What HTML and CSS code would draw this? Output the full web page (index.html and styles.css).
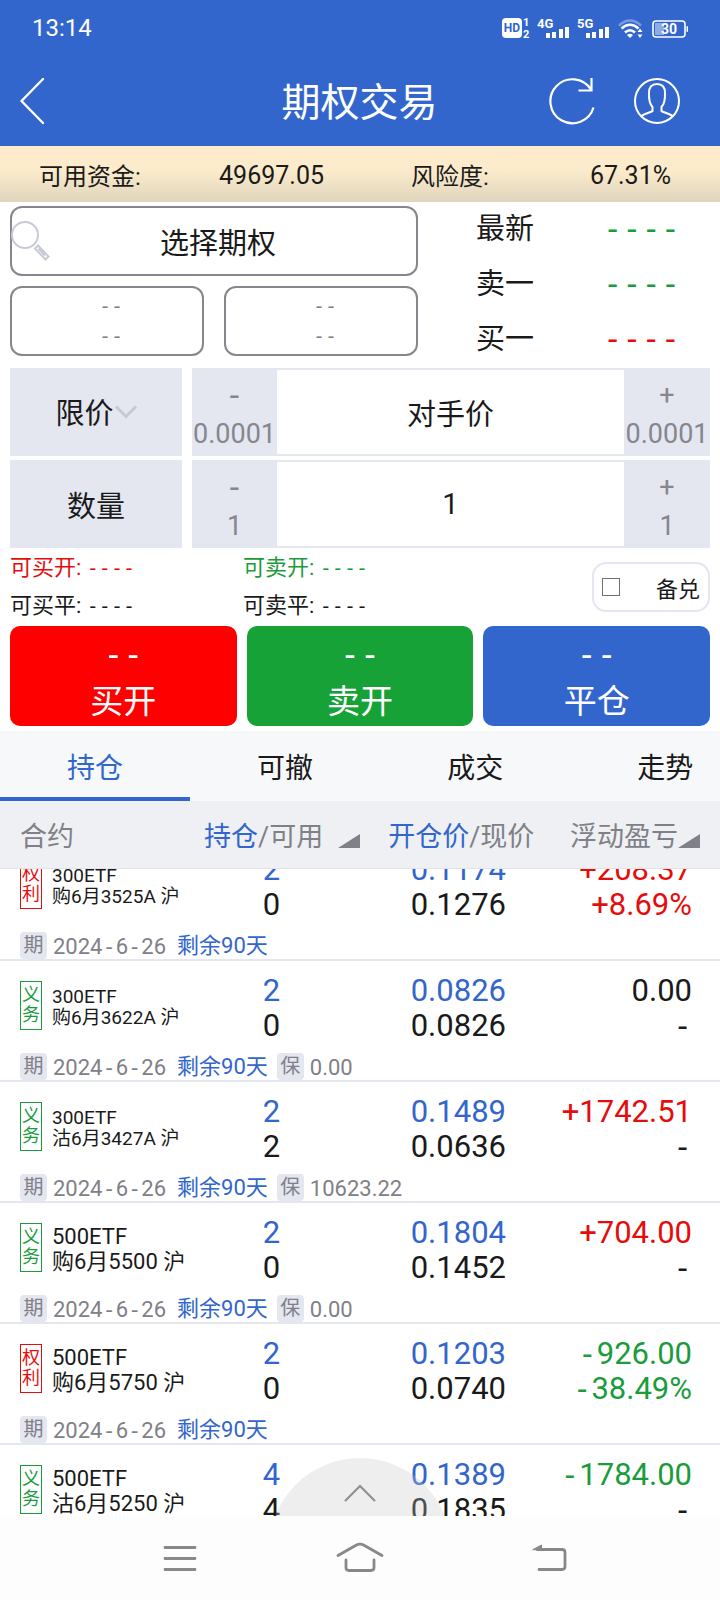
FILE: index.html
```html
<!DOCTYPE html>
<html lang="zh-CN">
<head>
<meta charset="utf-8">
<meta name="viewport" content="width=device-width, initial-scale=1">
<title>期权交易</title>
<link rel="stylesheet" href="styles.css">
</head>
<body>
<div class="app">
  <header class="header">
    <div class="status">
      <span class="clock">13:14</span>
      <svg class="status-icons" width="188" height="24" viewBox="501 16 188 24" fill="#fff" aria-hidden="true">
        <rect x="502" y="18" width="20" height="20" rx="4"/>
        <text x="512" y="32" class="hd-text" text-anchor="middle">HD</text>
        <text x="523" y="26" class="sim-text">1</text>
        <text x="523" y="38" class="sim-text">2</text>
        <text x="537" y="28" class="net-text">4G</text>
        <path d="M546 33h4v5h-4zM552 32h4v6h-4zM559 29h4v9h-4zM565 27h4v11h-4z"/>
        <text x="577" y="28" class="net-text">5G</text>
        <path d="M586 33h4v5h-4zM592 32h4v6h-4zM599 29h4v9h-4zM605 27h4v11h-4z"/>
        <g fill="none" stroke="#fff" stroke-width="2.6">
          <path d="M619 25.500Q630 15.500 641 25.500" opacity=".35"/>
          <path d="M621.500 28.500Q630 21 638.500 28.500"/>
          <path d="M625 32.500Q630 28 635 32.500"/>
        </g>
        <path d="M627 35Q630 32.500 633 35L630 38z"/>
        <path d="M637.500 32L640 28.500L642.500 32zM637.500 34.500L640 38L642.500 34.500z"/>
        <rect x="653" y="21" width="32" height="16" rx="3" fill="none" stroke="#fff" stroke-width="1.600"/>
        <rect x="655" y="23" width="9" height="12" opacity=".45"/>
        <rect x="686.500" y="26" width="1.500" height="6" rx=".7"/>
        <text x="669" y="34" class="battery-text" text-anchor="middle">30</text>
      </svg>
    </div>
    <div class="titlebar">
      <button class="icon-button" aria-label="返回">
        <svg width="26" height="48" viewBox="0 0 26 48" fill="none" stroke="#fff" stroke-width="2.400" stroke-linecap="round" stroke-linejoin="round"><path d="M23 2L1.500 24L23 46"/></svg>
      </button>
      <h1 class="title">期权交易</h1>
      <div class="actions">
        <button class="icon-button" aria-label="刷新">
          <svg width="48" height="48" viewBox="0 0 48 48" fill="none" stroke="#fff" stroke-width="2.200"><path d="M44.500 30.500A22 22 0 1 1 42 12.500M42.500 1V13.500H29.500"/></svg>
        </button>
        <button class="icon-button" aria-label="账户">
          <svg width="48" height="48" viewBox="0 0 48 48" fill="none" stroke="#fff" stroke-width="2"><circle cx="24" cy="24" r="22"/><path d="M8 39.500C11 36.500 18 35.500 19.500 34V30C16.500 27 15.800 22 16 16C16 10 19 7 24 7S32 10 32 16C32.200 22 31.500 27 28.500 30V34C30 35.500 37 36.500 40 39.500"/></svg>
        </button>
      </div>
    </div>
  </header>

  <section class="funds">
    <span>可用资金:</span><span class="funds-value">49697.05</span>
    <span>风险度:</span><span class="funds-value">67.31%</span>
  </section>

  <main class="main">
    <section class="quote-area">
      <div class="pickers">
        <button class="outline-box picker">
          <svg class="search-icon" width="40" height="40" viewBox="0 0 40 40" fill="none" stroke="#c8cbd6" stroke-width="2"><circle cx="14" cy="14" r="13"/><path d="M24 27.500L27 24.500L37.500 35.500L34.500 38.500zM27.500 27.500L34 34.500"/></svg>
          选择期权
        </button>
        <button class="outline-box pair"><span class="dash">--</span><span class="dash">--</span></button>
        <button class="outline-box pair"><span class="dash">--</span><span class="dash">--</span></button>
      </div>
      <dl class="quotes">
        <dt>最新</dt><dd class="dash green">----</dd>
        <dt>卖一</dt><dd class="dash green">----</dd>
        <dt>买一</dt><dd class="dash red">----</dd>
      </dl>
    </section>

    <section class="order">
      <label class="field-label price-label">
        <select class="price-type" aria-label="价格类型"><option>限价</option></select>
        <svg width="22" height="14" viewBox="0 0 22 14" fill="none" stroke="#c8c9cf" stroke-width="3"><path d="M1 1.500L11 11.500L21 1.500"/></svg>
      </label>
      <div class="stepper">
        <button class="step"><span class="dash">-</span><span>0.0001</span></button>
        <input class="step-input" value="对手价" aria-label="价格">
        <button class="step"><span class="sign">+</span><span>0.0001</span></button>
      </div>
      <label class="field-label" for="quantity">数量</label>
      <div class="stepper">
        <button class="step"><span class="dash">-</span><span>1</span></button>
        <input class="step-input" id="quantity" value="1">
        <button class="step"><span class="sign">+</span><span>1</span></button>
      </div>
    </section>

    <section class="limits">
      <div class="limits-grid">
        <span class="red">可买开: <span class="dash">----</span></span>
        <span class="green">可卖开: <span class="dash">----</span></span>
        <span>可买平: <span class="dash">----</span></span>
        <span>可卖平: <span class="dash">----</span></span>
      </div>
      <label class="covered"><input type="checkbox" class="covered-box">备兑</label>
    </section>

    <section class="trade">
      <button class="trade-button buy"><span class="dash">--</span><span>买开</span></button>
      <button class="trade-button sell"><span class="dash">--</span><span>卖开</span></button>
      <button class="trade-button close"><span class="dash">--</span><span>平仓</span></button>
    </section>
  </main>

  <nav class="tabs">
    <button class="tab active">持仓</button>
    <button class="tab">可撤</button>
    <button class="tab">成交</button>
    <button class="tab">走势</button>
  </nav>

  <div class="list-wrap">
    <div class="list" id="list">
      <table class="positions">
        <colgroup><col class="col-name"><col class="col-qty"><col class="col-gap"><col class="col-price"><col class="col-pnl"></colgroup>
        <thead>
          <tr>
            <th class="head-name">合约</th>
            <th colspan="2" class="head-qty"><span class="blue">持仓</span>/可用<svg class="sort spaced" width="22" height="14" viewBox="0 0 22 14"><path d="M0 14L22 0V14z" fill="#808088"/></svg></th>
            <th class="head-price"><span class="blue">开仓价</span>/现价</th>
            <th class="head-pnl">浮动盈亏<svg class="sort" width="22" height="14" viewBox="0 0 22 14"><path d="M0 14L22 0V14z" fill="#808088"/></svg></th>
          </tr>
        </thead>
        <tbody>
          <tr class="row">
            <td class="name"><div class="contract small"><span class="badge red">权利</span><span>300ETF<br>购6月3525A 沪</span></div></td>
            <td class="num"><span class="blue">2</span><br>0</td>
            <td class="num price" colspan="2"><span class="blue">0.1174</span><br>0.1276</td>
            <td class="num pnl red">+208.37<br>+8.69%</td>
          </tr>
          <tr><td class="detail" colspan="5"><div class="detail-line"><span class="tag">期</span><span class="date">2024<span class="dash">-</span>6<span class="dash">-</span>26</span><span class="remain">剩余90天</span></div></td></tr>
        </tbody>
        <tbody>
          <tr class="row">
            <td class="name"><div class="contract small"><span class="badge green">义务</span><span>300ETF<br>购6月3622A 沪</span></div></td>
            <td class="num"><span class="blue">2</span><br>0</td>
            <td class="num price" colspan="2"><span class="blue">0.0826</span><br>0.0826</td>
            <td class="num pnl">0.00<br><span class="dash">-</span></td>
          </tr>
          <tr><td class="detail" colspan="5"><div class="detail-line"><span class="tag">期</span><span class="date">2024<span class="dash">-</span>6<span class="dash">-</span>26</span><span class="remain">剩余90天</span><span class="tag">保</span><span class="margin">0.00</span></div></td></tr>
        </tbody>
        <tbody>
          <tr class="row">
            <td class="name"><div class="contract small"><span class="badge green">义务</span><span>300ETF<br>沽6月3427A 沪</span></div></td>
            <td class="num"><span class="blue">2</span><br>2</td>
            <td class="num price" colspan="2"><span class="blue">0.1489</span><br>0.0636</td>
            <td class="num pnl"><span class="red">+1742.51</span><br><span class="dash">-</span></td>
          </tr>
          <tr><td class="detail" colspan="5"><div class="detail-line"><span class="tag">期</span><span class="date">2024<span class="dash">-</span>6<span class="dash">-</span>26</span><span class="remain">剩余90天</span><span class="tag">保</span><span class="margin">10623.22</span></div></td></tr>
        </tbody>
        <tbody>
          <tr class="row">
            <td class="name"><div class="contract"><span class="badge green">义务</span><span>500ETF<br>购6月5500 沪</span></div></td>
            <td class="num"><span class="blue">2</span><br>0</td>
            <td class="num price" colspan="2"><span class="blue">0.1804</span><br>0.1452</td>
            <td class="num pnl"><span class="red">+704.00</span><br><span class="dash">-</span></td>
          </tr>
          <tr><td class="detail" colspan="5"><div class="detail-line"><span class="tag">期</span><span class="date">2024<span class="dash">-</span>6<span class="dash">-</span>26</span><span class="remain">剩余90天</span><span class="tag">保</span><span class="margin">0.00</span></div></td></tr>
        </tbody>
        <tbody>
          <tr class="row">
            <td class="name"><div class="contract"><span class="badge red">权利</span><span>500ETF<br>购6月5750 沪</span></div></td>
            <td class="num"><span class="blue">2</span><br>0</td>
            <td class="num price" colspan="2"><span class="blue">0.1203</span><br>0.0740</td>
            <td class="num pnl green"><span class="dash">-</span>926.00<br><span class="dash">-</span>38.49%</td>
          </tr>
          <tr><td class="detail" colspan="5"><div class="detail-line"><span class="tag">期</span><span class="date">2024<span class="dash">-</span>6<span class="dash">-</span>26</span><span class="remain">剩余90天</span></div></td></tr>
        </tbody>
        <tbody>
          <tr class="row">
            <td class="name"><div class="contract"><span class="badge green">义务</span><span>500ETF<br>沽6月5250 沪</span></div></td>
            <td class="num"><span class="blue">4</span><br>4</td>
            <td class="num price" colspan="2"><span class="blue">0.1389</span><br>0.1835</td>
            <td class="num pnl"><span class="green"><span class="dash">-</span>1784.00</span><br><span class="dash">-</span></td>
          </tr>
          <tr><td class="detail" colspan="5"></td></tr>
        </tbody>
      </table>
    </div>
    <button class="expand" aria-label="展开">
      <svg width="32" height="18" viewBox="0 0 32 18" fill="none" stroke="#909090" stroke-width="2.200"><path d="M1 17L16 2L31 17"/></svg>
    </button>
  </div>

  <nav class="system">
    <button class="icon-button recent" aria-label="最近任务"><svg width="48" height="34" viewBox="0 0 48 34" fill="none" stroke="#888" stroke-width="2.800" stroke-linecap="round"><path d="M9 6.500H39M9 17.500H39M9 28.500H39"/></svg></button>
    <button class="icon-button" aria-label="主屏幕"><svg width="48" height="34" viewBox="0 0 48 34" fill="none" stroke="#888" stroke-width="2.800" stroke-linecap="round" stroke-linejoin="round"><path d="M2 14.500L20 4.200Q24 2.200 28 4.200L46 14.500M10 19V26.500Q10 29.500 13 29.500H35Q38 29.500 38 26.500V19"/></svg></button>
    <button class="icon-button back" aria-label="返回上一级"><svg width="48" height="34" viewBox="0 0 48 34" fill="none" stroke="#888" stroke-width="2.800" stroke-linecap="round" stroke-linejoin="round"><path d="M12 28.500H35Q38 28.500 38 25.500V11.500Q38 8.500 35 8.500H10"/><path d="M6 8.500L14.500 4V8.500z" fill="#888" stroke-width="1"/></svg></button>
  </nav>
</div>
<script src="script.js"></script>
</body>
</html>
```

FILE: styles.css
```css
* { box-sizing: border-box; }

body {
  margin: 0;
  background: #fff;
  color: #1a1a1a;
  font-family: Roboto, "Noto Sans CJK SC", sans-serif;
}

button, input, select {
  margin: 0;
  padding: 0;
  border: 0;
  background: none;
  color: inherit;
  font: inherit;
}

.app { display: flex; flex-direction: column; height: 100vh; }

.red { color: #e60c0c; }
.green { color: #1a9c3c; }
.blue { color: #3366cc; }
.dash { font-family: "DejaVu Sans Mono", monospace; }

/* header */
.header { background: #3366cc; color: #fff; }
.status {
  display: flex;
  align-items: center;
  justify-content: space-between;
  height: 56px;
  padding: 0 31px 0 32px;
}
.clock { font-size: 24px; line-height: 32px; }
.hd-text { font: bold 12px Roboto, sans-serif; fill: #3366cc; }
.sim-text { font: bold 11px Roboto, sans-serif; }
.net-text { font: bold 13px Roboto, sans-serif; }
.battery-text { font: bold 14px Roboto, sans-serif; }
.titlebar {
  display: grid;
  grid-template-columns: 1fr auto 1fr;
  align-items: center;
  height: 90px;
  padding: 0 39px 0 20px;
}
.title { margin: 0; padding: 4px 0 0 18px; font-size: 39px; font-weight: 400; line-height: 56px; }
.actions { display: flex; justify-content: flex-end; gap: 36px; }
.icon-button { display: flex; align-items: center; justify-content: flex-start; }

/* funds bar */
.funds {
  display: grid;
  grid-template-columns: 143fr 229fr 120fr 140fr;
  align-items: center;
  height: 56px;
  padding: 0 49px 0 39px;
  background: linear-gradient(#feeccb, #fbebcb 45%, #dfd4bd);
  font-size: 24px;
}
.funds-value { padding-top: 2px; text-align: right; font-size: 25px; }
.funds-value:nth-child(2) { padding-right: 87px; }

/* quotes */
.quote-area { display: grid; grid-template-columns: 408fr 292fr; padding: 0 10px; }
.pickers {
  display: grid;
  grid-template-columns: 1fr 1fr;
  align-content: start;
  gap: 10px 20px;
  padding-top: 4px;
}
.outline-box {
  height: 70px;
  border: 2px solid #86868c;
  border-radius: 12px;
}
.picker { position: relative; grid-column: 1 / -1; padding-left: 8px; font-size: 29px; }
.search-icon { position: absolute; left: -1px; top: 13px; }
.pair {
  display: flex;
  flex-direction: column;
  align-items: center;
  justify-content: center;
  padding-left: 8px;
  color: #808088;
  font-size: 20px;
  line-height: 30px;
}
.quotes {
  display: grid;
  grid-template-columns: 1fr 1fr;
  margin: 0;
  padding-left: 58px;
  font-size: 29px;
  line-height: 55px;
}
.quotes dd { margin: 0; padding-left: 10px; font-size: 32px; }

/* order form */
.order {
  display: grid;
  grid-template-columns: 172fr 518fr;
  gap: 4px 10px;
  padding: 1px 10px 0;
  font-size: 29px;
}
.field-label {
  display: flex;
  align-items: center;
  justify-content: center;
  height: 88px;
  background: #e4e6f0;
}
.price-type { appearance: none; padding-top: 4px; line-height: 44px; }
.stepper {
  display: grid;
  grid-template-columns: 85px 1fr 86px;
  border: 1px solid #e4e6f0;
  border-width: 2px 0;
}
.step {
  display: flex;
  flex-direction: column;
  align-items: center;
  justify-content: center;
  padding-top: 6px;
  background: #e4e6f0;
  color: #86868c;
  font-size: 27px;
  line-height: 39px;
}
.step .dash { font-size: 32px; }
.step-input { width: 100%; min-width: 0; text-align: center; }

/* limits */
.limits {
  display: flex;
  align-items: center;
  justify-content: space-between;
  height: 78px;
  padding: 0 10px;
  font-size: 22px;
}
.limits-grid {
  display: grid;
  grid-template-columns: 233px 233px;
  line-height: 38px;
}
.limits .dash { font-size: 20px; line-height: 1; }
.covered {
  display: flex;
  align-items: center;
  justify-content: space-between;
  width: 118px;
  height: 50px;
  padding: 0 8px;
  border: 2px solid #e4e6f0;
  border-radius: 14px;
}
.covered-box {
  appearance: none;
  width: 18px;
  height: 18px;
  border: 1px solid #707074;
  background: #fff;
}

/* trade buttons */
.trade { display: grid; grid-template-columns: repeat(3, 1fr); gap: 10px; padding: 0 10px 5px; }
.trade-button {
  display: flex;
  flex-direction: column;
  align-items: center;
  height: 100px;
  padding-top: 5px;
  border-radius: 10px;
  color: #fff;
  font-size: 33px;
  line-height: 47px;
}
.buy { background: #f00; }
.sell { background: #17a238; }
.close { background: #3366cc; }

/* tabs */
.tabs { display: flex; height: 70px; overflow: hidden; background: #f7f8fa; }
.tab {
  flex: 0 0 26.4%;
  padding-top: 4px;
  border-bottom: 4px solid transparent;
  font-size: 28px;
}
.tab.active { border-color: #3366cc; color: #3366cc; }

/* positions */
.list-wrap { position: relative; flex: 1; min-height: 0; overflow: hidden; }
.list { height: 100%; overflow-y: auto; scrollbar-width: none; }
.positions { width: 100%; table-layout: fixed; border-collapse: separate; border-spacing: 0; }
.col-name { width: 26.4%; }
.col-qty { width: 12.5%; }
.col-gap { width: 13.9%; }
.col-price { width: 22.2%; }
.col-pnl { width: 25%; }
.positions th {
  position: sticky;
  top: 0;
  z-index: 1;
  height: 68px;
  padding: 0;
  border-bottom: 1px solid #e2e3e7;
  background: #eff0f3;
  color: #808088;
  font-size: 27px;
  font-weight: 400;
  text-align: left;
  white-space: nowrap;
}
.positions .head-name { padding-left: 20px; }
.positions .head-qty { padding-left: 14px; }
.positions .head-price { padding-left: 8px; }
.positions .head-pnl { padding-right: 20px; text-align: right; }
.sort { vertical-align: -2px; }
.sort.spaced { margin-left: 15px; }
.positions td { padding: 0; }
.row { height: 88px; }
.positions .row td { vertical-align: top; }
.positions .name { padding: 20px 0 0 20px; }
.contract {
  display: flex;
  align-items: center;
  gap: 10px;
  height: 51px;
  font-size: 22px;
  line-height: 25px;
  white-space: nowrap;
}
.contract.small { font-size: 19px; line-height: 21px; }
.badge {
  align-self: flex-start;
  width: 22px;
  height: 49px;
  padding: 3px 1px;
  border: 1px solid;
  font-size: 18px;
  line-height: 20px;
  white-space: normal;
}
.positions .num { padding-top: 12px; text-align: right; font-size: 31px; line-height: 35px; white-space: nowrap; }
.num .dash, .date .dash { line-height: 1; }
.positions .price { padding-right: 34px; }
.positions .pnl { padding-right: 28px; }
.positions .detail { height: 33px; border-bottom: 2px solid #e4e6f0; }
.detail-line {
  display: flex;
  align-items: center;
  height: 31px;
  padding: 4px 20px 0;
  color: #808088;
  font-size: 22px;
  line-height: 27px;
}
.tag { width: 27px; margin-right: 6px; border-radius: 4px; background: #e4e6f0; font-size: 20px; text-align: center; }
.date { padding-top: 2px; margin-right: 11px; }
.margin { padding-top: 2px; }
.remain { margin-right: 9px; color: #3366cc; }

.expand {
  position: absolute;
  left: 50%;
  bottom: -124px;
  display: flex;
  justify-content: center;
  width: 182px;
  height: 182px;
  margin-left: -91px;
  padding-top: 26px;
  border-radius: 50%;
  background: rgba(200, 200, 200, .3);
}

/* system navigation */
.system {
  display: grid;
  grid-template-columns: 1fr auto 1fr;
  align-items: center;
  height: 84px;
  background: #fdfdfd;
}
.recent { justify-self: end; margin-right: 132px; }
.back { justify-self: start; margin-left: 143px; }
```

FILE: script.js
```js
document.getElementById("list").scrollTop = 29;
```
